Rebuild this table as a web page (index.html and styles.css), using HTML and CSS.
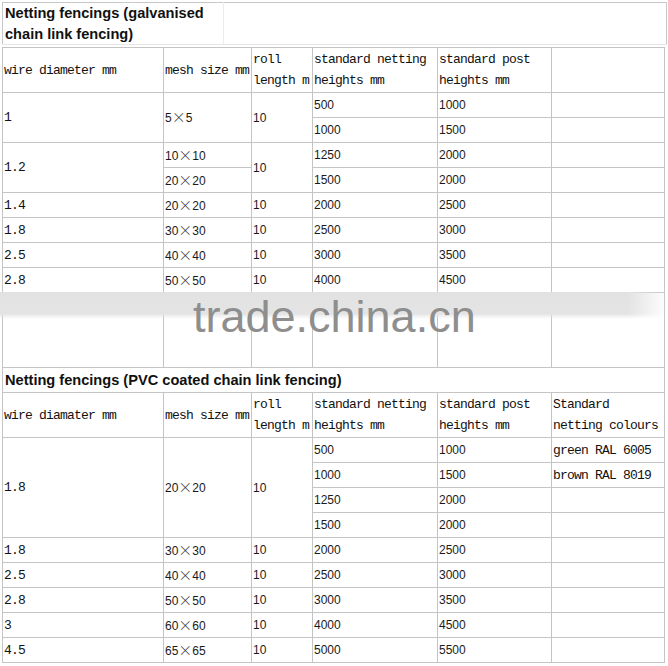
FILE: index.html
```html
<!DOCTYPE html>
<html>
<head>
<meta charset="utf-8">
<link rel="stylesheet" href="styles.css">
</head>
<body>
<div class="page">
  <table class="title-tbl">
    <tr>
      <td class="title-cell">Netting fencings (galvanised<br>chain link fencing)</td>
      <td class="title-blank"></td>
    </tr>
  </table>
  <table class="grid">
    <colgroup>
      <col class="c1"><col class="c2"><col class="c3"><col class="c4"><col class="c5"><col class="c6">
    </colgroup>
    <tr class="head">
      <td class="m">wire diameter mm</td>
      <td class="m">mesh size mm</td>
      <td class="m">roll<br>length m</td>
      <td class="m">standard netting<br>heights mm</td>
      <td class="m">standard post<br>heights mm</td>
      <td></td>
    </tr>
    <tr class="r">
      <td class="m" rowspan="2">1</td><td rowspan="2">5<span class="x">×</span>5</td><td rowspan="2">10</td><td>500</td><td>1000</td><td></td>
    </tr>
    <tr class="r"><td>1000</td><td>1500</td><td></td></tr>
    <tr class="r">
      <td class="m" rowspan="2">1.2</td><td>10<span class="x">×</span>10</td><td rowspan="2">10</td><td>1250</td><td>2000</td><td></td>
    </tr>
    <tr class="r"><td>20<span class="x">×</span>20</td><td>1500</td><td>2000</td><td></td></tr>
    <tr class="r"><td class="m">1.4</td><td>20<span class="x">×</span>20</td><td>10</td><td>2000</td><td>2500</td><td></td></tr>
    <tr class="r"><td class="m">1.8</td><td>30<span class="x">×</span>30</td><td>10</td><td>2500</td><td>3000</td><td></td></tr>
    <tr class="r"><td class="m">2.5</td><td>40<span class="x">×</span>40</td><td>10</td><td>3000</td><td>3500</td><td></td></tr>
    <tr class="r"><td class="m">2.8</td><td>50<span class="x">×</span>50</td><td>10</td><td>4000</td><td>4500</td><td></td></tr>
    <tr class="gap"><td></td><td></td><td></td><td></td><td></td><td></td></tr>
    <tr class="r"><td colspan="6" class="sec-title">Netting fencings (PVC coated chain link fencing)</td></tr>
    <tr class="head">
      <td class="m">wire diamater mm</td>
      <td class="m">mesh size mm</td>
      <td class="m">roll<br>length m</td>
      <td class="m">standard netting<br>heights mm</td>
      <td class="m">standard post<br>heights mm</td>
      <td class="m">Standard<br>netting colours</td>
    </tr>
    <tr class="r">
      <td class="m" rowspan="4">1.8</td><td rowspan="4">20<span class="x">×</span>20</td><td rowspan="4">10</td><td>500</td><td>1000</td><td class="m">green RAL 6005</td>
    </tr>
    <tr class="r"><td>1000</td><td>1500</td><td class="m">brown RAL 8019</td></tr>
    <tr class="r"><td>1250</td><td>2000</td><td></td></tr>
    <tr class="r"><td>1500</td><td>2000</td><td></td></tr>
    <tr class="r"><td class="m">1.8</td><td>30<span class="x">×</span>30</td><td>10</td><td>2000</td><td>2500</td><td></td></tr>
    <tr class="r"><td class="m">2.5</td><td>40<span class="x">×</span>40</td><td>10</td><td>2500</td><td>3000</td><td></td></tr>
    <tr class="r"><td class="m">2.8</td><td>50<span class="x">×</span>50</td><td>10</td><td>3000</td><td>3500</td><td></td></tr>
    <tr class="r"><td class="m">3</td><td>60<span class="x">×</span>60</td><td>10</td><td>4000</td><td>4500</td><td></td></tr>
    <tr class="r"><td class="m">4.5</td><td>65<span class="x">×</span>65</td><td>10</td><td>5000</td><td>5500</td><td></td></tr>
  </table>
  <div class="wm-band"></div>
  <div class="wm-text">trade.china.cn</div>
</div>
</body>
</html>
```

FILE: styles.css
```css
html, body {
  margin: 0;
  padding: 0;
  background: #ffffff;
}

.page {
  position: relative;
  width: 668px;
  height: 666px;
  overflow: hidden;
  padding-top: 2px;
  box-sizing: border-box;
  font-family: "Liberation Sans", Arial, sans-serif;
  font-size: 12px;
  color: #1a1a1a;
}

.title-tbl {
  border-collapse: collapse;
  margin-left: 2px;
  width: 665px;
  table-layout: fixed;
}

.title-tbl td {
  border-top: 1px solid #c8c8c8;
  border-bottom: 1px solid #e6e6e6;
  padding: 0 0 0 2px;
  height: 41px;
  vertical-align: middle;
}

.title-cell {
  width: 218px;
  border-left: 1px solid #c8c8c8;
  border-right: 1px solid #ececec;
  font-weight: bold;
  font-size: 14.6px;
  line-height: 20.5px;
  color: #111;
}

.title-blank {
  border-right: 1px solid #c8c8c8;
}

.grid {
  border-collapse: collapse;
  table-layout: fixed;
  margin-left: 2px;
  margin-top: 2px;
  width: 663px;
}

.c1 { width: 161px; }
.c2 { width: 88px; }
.c3 { width: 61px; }
.c4 { width: 125px; }
.c5 { width: 114px; }
.c6 { width: 113px; }

.grid td {
  border: 1px solid #c4c4c4;
  padding: 0 0 0 1px;
  vertical-align: middle;
  white-space: nowrap;
  overflow: hidden;
}

.grid tr.r td {
  height: 24px;
}

.grid tr.head td {
  height: 44px;
  line-height: 21px;
}

.grid tr.gap td {
  height: 74px;
}

.m {
  font-family: "Liberation Mono", "Courier New", monospace;
  font-size: 13px;
  letter-spacing: -0.8px;
  color: #111;
}

.x {
  display: inline-block;
  width: 14px;
  text-align: center;
  font-family: "Noto Sans CJK SC", "DejaVu Sans", sans-serif;
  font-size: 14px;
  line-height: 12px;
  font-weight: 300;
  color: #333;
}

.sec-title {
  font-weight: bold;
  font-size: 14.6px;
  color: #111;
  padding-left: 2px !important;
}

.wm-band {
  position: absolute;
  left: 0;
  top: 292px;
  width: 668px;
  height: 27px;
  background: linear-gradient(to bottom, #e2e2e2 0%, #e4e4e4 80%, rgba(236, 236, 236, 0) 100%);
  -webkit-mask-image: linear-gradient(to right, #000 0%, #000 94%, transparent 100%);
  mask-image: linear-gradient(to right, #000 0%, #000 94%, transparent 100%);
}

.wm-text {
  position: absolute;
  left: 193px;
  top: 294px;
  font-family: "Liberation Sans", Arial, sans-serif;
  font-size: 45px;
  line-height: 45px;
  color: #8e8e8e;
  white-space: nowrap;
}
```
